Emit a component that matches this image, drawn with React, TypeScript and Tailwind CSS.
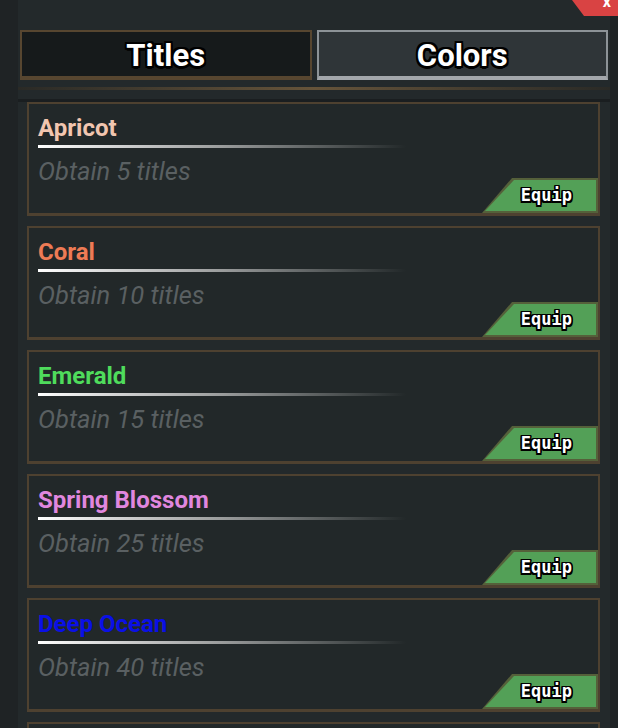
import React from "react";

const colors = [
  { name: "Apricot", req: 5, color: "text-[#f2c6b0]" },
  { name: "Coral", req: 10, color: "text-[#ee7b55]" },
  { name: "Emerald", req: 15, color: "text-[#4fdc5c]" },
  { name: "Spring Blossom", req: 25, color: "text-[#e087df]" },
  { name: "Deep Ocean", req: 40, color: "text-[#0a10e6]" },
  { name: "Sunset", req: 50, color: "text-[#f0a040]" },
];

const outline =
  "[text-shadow:-2px_-2px_0_#000,2px_-2px_0_#000,-2px_2px_0_#000,2px_2px_0_#000,0_-2px_0_#000,0_2px_0_#000,-2px_0_0_#000,2px_0_0_#000,0_3px_0_#000]";

function ColorCard({ name, req, color }: { name: string; req: number; color: string }) {
  return (
    <div className="flex h-[114px] shrink-0 flex-col border-2 border-b-[3px] border-[#4e4130] bg-[#222829]">
      <div className="h-[74px] px-[9px] pt-[11px]">
        <div className={`text-[24px] font-bold leading-[26px] ${color}`}>{name}</div>
        <div className="mt-[4px] h-[3px] w-[368px] bg-gradient-to-r from-white via-[#9a9c9c] to-transparent" />
        <div className="mt-[9px] text-[25.5px] italic leading-[28px] text-[#5a6062]">
          Obtain {req} titles
        </div>
      </div>
      <div className="mt-auto shrink-0 self-end bg-[#55603a] p-[2px] pl-[3px] [clip-path:polygon(30px_0,100%_0,100%_100%,0_100%)]">
        <div className="flex h-[31px] w-[111px] items-center justify-end bg-[#53a057] pr-[24px] [clip-path:polygon(29px_0,100%_0,100%_100%,0_100%)]">
          <span className="font-['DejaVu_Sans_Mono',monospace] text-[17px] font-bold text-white [text-shadow:-1.5px_-1.5px_0_#000,1.5px_-1.5px_0_#000,-1.5px_1.5px_0_#000,1.5px_1.5px_0_#000,0_-1.5px_0_#000,0_1.5px_0_#000,-1.5px_0_0_#000,1.5px_0_0_#000]">
            Equip
          </span>
        </div>
      </div>
    </div>
  );
}

export default function App() {
  return (
    <div className="relative flex h-[728px] w-[618px] overflow-hidden bg-[#1f2325] font-['Roboto',sans-serif]">
      {/* close button */}
      <div className="absolute right-0 top-0 flex h-[16px] w-[46px] items-start justify-end bg-[#d94343] pr-[7px] [clip-path:polygon(0_0,100%_0,100%_100%,12px_100%)]">
        <span className="-mt-[6px] text-[16px] font-bold leading-[16px] text-white">x</span>
      </div>

      <div className="ml-[18px] mr-[8px] flex flex-1 flex-col bg-[#23292b]">
        {/* tabs */}
        <div className="mt-[30px] flex gap-[5px] pl-[2px] pr-[2px]">
          <div className="flex h-[50px] flex-1 items-center justify-center border-2 border-b-4 border-[#574630] bg-[#161a1b] pt-[3px]">
            <span className={`text-[31px] font-bold leading-[36px] text-white ${outline}`}>Titles</span>
          </div>
          <div className="flex h-[50px] flex-1 items-center justify-center border-2 border-b-4 border-[#8d9397] border-b-[#a3a7ab] bg-[#2f3538] pt-[3px]">
            <span className={`text-[31px] font-bold leading-[36px] text-white ${outline}`}>Colors</span>
          </div>
        </div>

        {/* separator */}
        <div className="mt-[7px] h-[3px] bg-gradient-to-r from-[#2a2a26] via-[#66543a] to-[#2a2a26]" />

        {/* list */}
        <div className="mt-[9px] flex flex-1 flex-col gap-[10px] overflow-hidden border-t-[3px] border-[#1a1e20] pl-[9px] pr-[10px]">
          {colors.map((c) => (
            <ColorCard key={c.name} {...c} />
          ))}
        </div>
      </div>
    </div>
  );
}
